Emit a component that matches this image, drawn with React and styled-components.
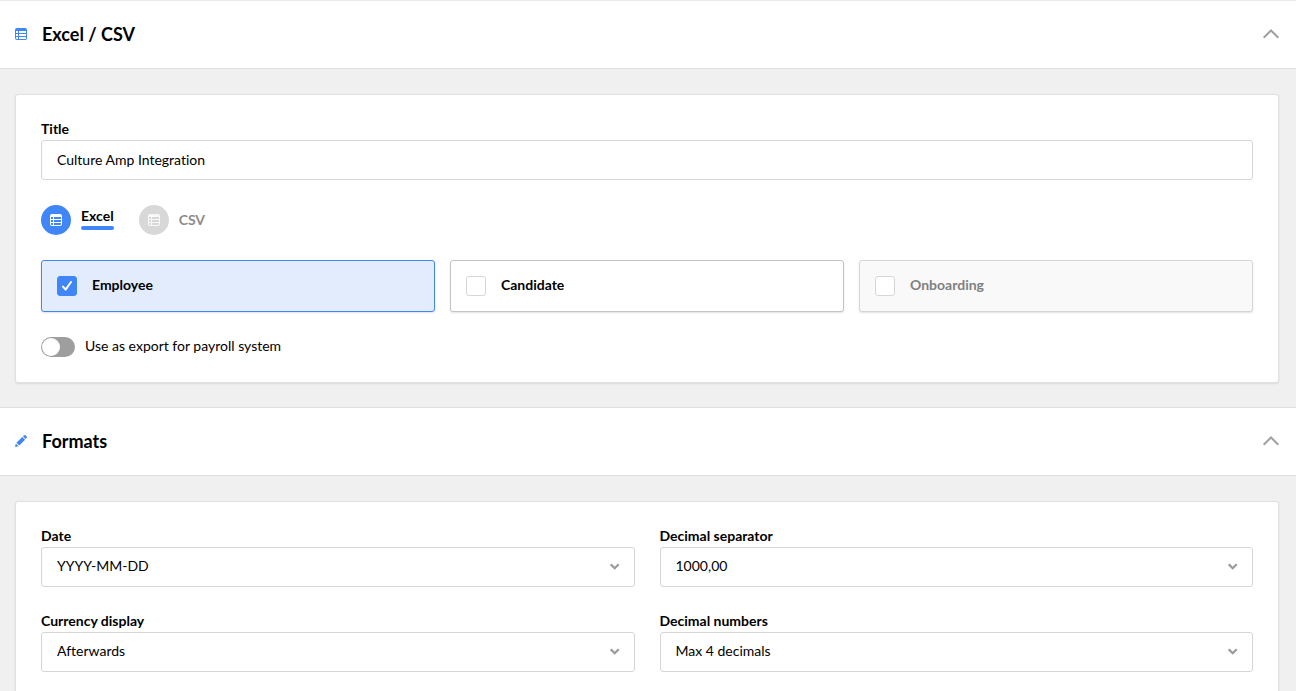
import React, { useState } from "react";
import styled, { createGlobalStyle, css } from "styled-components";

const GlobalStyle = createGlobalStyle`
  * {
    box-sizing: border-box;
  }

  html {
    scrollbar-width: none;
  }

  body {
    margin: 0;
    background-color: #f0f0f0;
    color: #000;
    font-family: Lato, "Liberation Sans", sans-serif;
    font-size: 14px;
    line-height: 20px;
    font-variant-ligatures: none;
  }

  button,
  input,
  select {
    font: inherit;
    font-variant-ligatures: none;
    color: inherit;
  }
`;

const SectionHeader = styled.button`
  display: flex;
  align-items: center;
  gap: 15px;
  width: 100%;
  padding: 21px 17px 22px 15px;
  border: 1px solid #dfdfdf;
  border-width: 1px 0;
  background-color: #fff;
  text-align: left;
  cursor: pointer;

  section:first-of-type > & {
    border-top-color: #ebebeb;
  }
`;

const SectionTitle = styled.span`
  flex: 1;
  font-size: 18px;
  font-weight: 700;
  line-height: 24px;
`;

const HeaderChevron = styled.svg`
  display: block;
  transform: ${({ $open }) => ($open ? "none" : "rotate(180deg)")};
`;

const SectionBody = styled.div`
  padding: 25px 17px 24px 15px;
`;

const Card = styled.div`
  display: flex;
  flex-direction: column;
  gap: 25px;
  padding: 25px;
  border: 1px solid #e0e0e0;
  border-radius: 3px;
  background-color: #fff;
  box-shadow: 0 1px 2px rgba(0, 0, 0, 0.1);
`;

const FieldGrid = styled.div`
  display: grid;
  grid-template-columns: 1fr 1fr;
  gap: 25px;
`;

const Field = styled.div`
  display: flex;
  flex-direction: column;
`;

const Label = styled.label`
  padding-bottom: 2px;
  font-weight: 700;
  line-height: 18px;
`;

const control = css`
  display: block;
  width: 100%;
  height: 40px;
  padding: 0 15px 2px;
  border: 1px solid #d6d6d6;
  border-radius: 3px;
  background-color: #fff;
`;

const Input = styled.input`
  ${control}
`;

const SelectWrapper = styled.div`
  position: relative;

  svg {
    position: absolute;
    right: 15px;
    top: 16px;
    pointer-events: none;
  }
`;

const Select = styled.select`
  ${control}
  appearance: none;
`;

const FileTypes = styled.div`
  display: flex;
  gap: 25px;
`;

const FileType = styled.label`
  display: flex;
  align-items: center;
  gap: 10px;
  cursor: pointer;
`;

const HiddenInput = styled.input`
  appearance: none;
  position: absolute;
  margin: 0;
  opacity: 0;
`;

const FileCircle = styled.span`
  display: flex;
  align-items: center;
  justify-content: center;
  width: 30px;
  height: 30px;
  border-radius: 50%;
  background-color: ${({ $active }) => ($active ? "#4086f7" : "#d8d8d8")};
`;

const FileName = styled.span`
  color: ${({ $active }) => ($active ? "#000" : "#8c8c8c")};
  font-weight: 700;

  ${({ $active }) =>
    $active &&
    css`
      padding-bottom: 4px;

      &::after {
        content: "";
        display: block;
        height: 4px;
        border-radius: 2px;
        background-color: #4086f7;
      }
    `}
`;

const Options = styled.div`
  display: grid;
  grid-template-columns: repeat(3, 1fr);
  gap: 15px;
`;

const Option = styled.label`
  display: flex;
  align-items: center;
  gap: 15px;
  padding: 15px;
  border: 1px solid #c4c4c4;
  border-radius: 3px;
  background-color: #fff;
  box-shadow: 0 1px 2px rgba(0, 0, 0, 0.12);
  font-weight: 700;

  ${({ $checked }) =>
    $checked &&
    css`
      border-color: #4086f7;
      background-color: #e3ecfd;
    `}

  ${({ $disabled }) =>
    $disabled &&
    css`
      border-color: #d6d6d6;
      background-color: #f9f9f9;
      color: #808080;
    `}
`;

const ControlText = styled.span`
  padding-bottom: 2px;
  line-height: 18px;
`;

const CheckboxWrapper = styled.span`
  display: grid;
  place-items: center;

  & > * {
    grid-area: 1 / 1;
  }

  svg {
    pointer-events: none;
  }
`;

const Checkbox = styled.input`
  appearance: none;
  width: 20px;
  height: 20px;
  margin: 0;
  border: 1px solid #d6d6d6;
  border-radius: 3px;
  background-color: #fff;

  &:checked {
    border-color: #4086f7;
    background-color: #4086f7;
  }
`;

const SwitchLabel = styled.label`
  display: flex;
  align-items: center;
  gap: 10px;
`;

const Switch = styled.input`
  appearance: none;
  display: flex;
  width: 34px;
  height: 20px;
  margin: 0;
  padding: 1px;
  border-radius: 10px;
  background-color: #9e9e9e;

  &::before {
    content: "";
    width: 18px;
    height: 18px;
    border-radius: 50%;
    background-color: #fff;
  }

  &:checked {
    justify-content: flex-end;
    background-color: #4086f7;
  }
`;

const TableIcon = ({ color, cell }) => (
  <svg width="12" height="12" viewBox="0 0 12 12" aria-hidden="true">
    <rect width="12" height="12" rx="2" fill={color} />
    <path
      fill={cell}
      d="M1 3h2v2H1zM4 3h7v2H4zM1 6h2v2H1zM4 6h7v2H4zM1 9h2v2H2a1 1 0 0 1-1-1zM4 9h7v1a1 1 0 0 1-1 1H4z"
    />
  </svg>
);

const PencilIcon = () => (
  <svg width="12" height="12" viewBox="0 0 12 12" fill="#4086f7" aria-hidden="true">
    <path d="M8.9.5a1.400 1.400 0 0 1 1.900 0l.7.7a1.400 1.400 0 0 1 0 1.900l-.9.9L8 1.400z" />
    <path d="M7.300 1.900l2.800 2.800-5.800 5.900-2.900-2.900z" />
    <path d="M.8 8.400L3.600 11.200 0 12z" />
  </svg>
);

const SelectArrow = () => (
  <svg width="10" height="7" viewBox="0 0 10 7" aria-hidden="true">
    <path d="M.7 1.200l4 4 4-4" fill="none" stroke="#9b9b9b" strokeWidth="2.300" />
  </svg>
);

function Section({ icon, title, children }) {
  const [open, setOpen] = useState(true);

  return (
    <section>
      <SectionHeader type="button" aria-expanded={open} onClick={() => setOpen(!open)}>
        {icon}
        <SectionTitle>{title}</SectionTitle>
        <HeaderChevron $open={open} width="16" height="10" viewBox="0 0 16 10">
          <path d="M.7 8.700L8 1.500l7.300 7.200" fill="none" stroke="#a0a0a0" strokeWidth="2" />
        </HeaderChevron>
      </SectionHeader>
      {open && (
        <SectionBody>
          <Card>{children}</Card>
        </SectionBody>
      )}
    </section>
  );
}

const selects = [
  { id: "date", label: "Date", options: ["YYYY-MM-DD"] },
  { id: "separator", label: "Decimal separator", options: ["1000,00"] },
  { id: "currency", label: "Currency display", options: ["Afterwards"] },
  { id: "decimals", label: "Decimal numbers", options: ["Max 4 decimals"] }
];

export default function App() {
  const [title, setTitle] = useState("Culture Amp Integration");
  const [fileType, setFileType] = useState("Excel");
  const [checked, setChecked] = useState({ Employee: true });

  const toggle = e => {
    setChecked({ ...checked, [e.target.name]: e.target.checked });
  };

  return (
    <main>
      <GlobalStyle />
      <Section icon={<TableIcon color="#4086f7" cell="#fff" />} title="Excel / CSV">
        <Field>
          <Label htmlFor="title">Title</Label>
          <Input type="text" id="title" value={title} onChange={e => setTitle(e.target.value)} />
        </Field>

        <FileTypes>
          {["Excel", "CSV"].map(type => {
            const active = type === fileType;
            return (
              <FileType key={type}>
                <HiddenInput
                  type="radio"
                  name="fileType"
                  checked={active}
                  onChange={() => setFileType(type)}
                />
                <FileCircle $active={active}>
                  <TableIcon color={active ? "#fff" : "#f8f8f8"} cell={active ? "#4086f7" : "#d8d8d8"} />
                </FileCircle>
                <FileName $active={active}>{type}</FileName>
              </FileType>
            );
          })}
        </FileTypes>

        <Options>
          {["Employee", "Candidate", "Onboarding"].map(name => {
            const disabled = name === "Onboarding";
            return (
              <Option key={name} $checked={checked[name]} $disabled={disabled}>
                <CheckboxWrapper>
                  <Checkbox
                    type="checkbox"
                    name={name}
                    checked={!!checked[name]}
                    disabled={disabled}
                    onChange={toggle}
                  />
                  {checked[name] && (
                    <svg width="10" height="10" viewBox="0 0 10 10" aria-hidden="true">
                      <path
                        d="M1 5.600l2.600 3L9 1"
                        fill="none"
                        stroke="#fff"
                        strokeWidth="2"
                        strokeLinecap="round"
                        strokeLinejoin="round"
                      />
                    </svg>
                  )}
                </CheckboxWrapper>
                <ControlText>{name}</ControlText>
              </Option>
            );
          })}
        </Options>

        <SwitchLabel>
          <Switch type="checkbox" role="switch" />
          <ControlText>Use as export for payroll system</ControlText>
        </SwitchLabel>
      </Section>

      <Section icon={<PencilIcon />} title="Formats">
        <FieldGrid>
          {selects.map(({ id, label, options }) => (
            <Field key={id}>
              <Label htmlFor={id}>{label}</Label>
              <SelectWrapper>
                <Select id={id}>
                  {options.map(option => (
                    <option key={option}>{option}</option>
                  ))}
                </Select>
                <SelectArrow />
              </SelectWrapper>
            </Field>
          ))}
        </FieldGrid>
      </Section>
    </main>
  );
}
